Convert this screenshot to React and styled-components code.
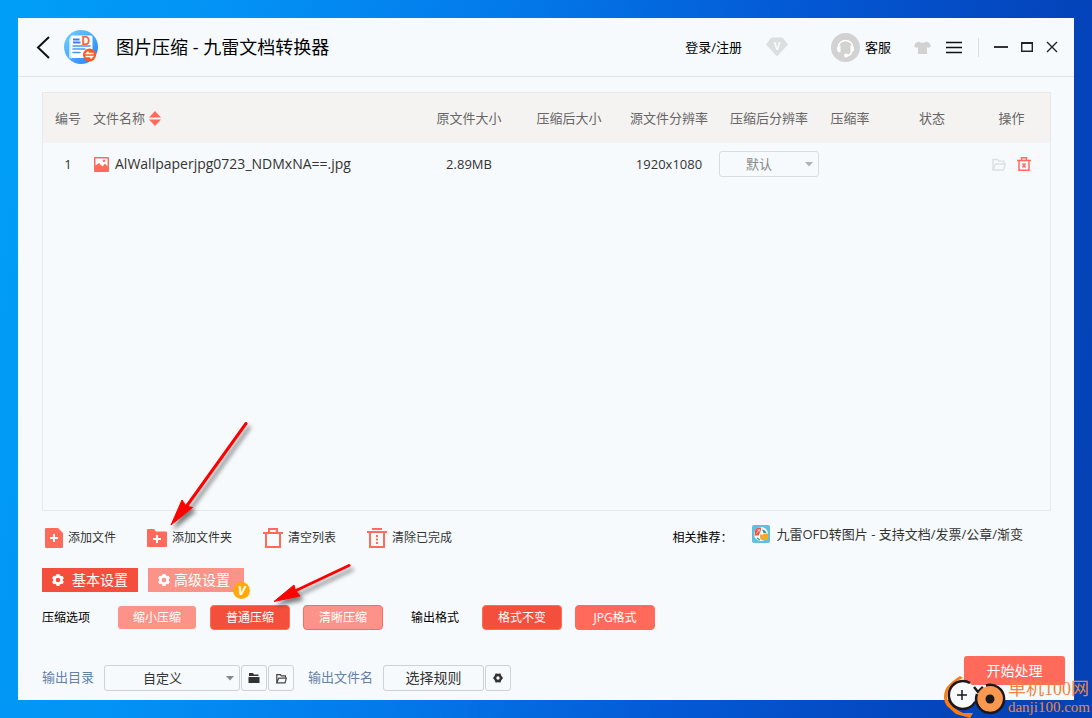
import React from "react";
import styled, { createGlobalStyle, css } from "styled-components";

const color = {
  surface: "#f6fafc",
  line: "#e2e5e7",
  control: "#cfd2d4",
  text: "#333333",
  muted: "#666666",
  label: "#6481a3",
  coral: "#ff6a5a",
  red: "#f44f3c",
  pale: "#fc9388",
  gray: "#d2d2d2",
};

const GlobalStyle = createGlobalStyle`
  *, *::before, *::after { box-sizing: border-box; }
  body { margin: 0; }
  body, button, select {
    font-family: "Open Sans", "Noto Sans CJK SC", sans-serif;
  }
  button { padding: 0; border: 0; background: none; color: inherit; cursor: pointer; }
  svg { display: block; flex: none; }
`;

const Desktop = styled.div`
  position: relative;
  display: flex;
  min-height: 100vh;
  padding: 18px;
  overflow: hidden;
  background: linear-gradient(100deg, #009ff6 0%, #0391f5 20%, #0379ea 42%, #0458d4 66%, #0444bb 88%, #0441b4 100%);
`;

const Window = styled.main`
  position: relative;
  flex: 1;
  min-width: 0;
  display: flex;
  flex-direction: column;
  background: ${color.surface};
  color: ${color.text};
`;

const TitleBar = styled.header`
  display: flex;
  align-items: center;
  height: 59px;
  padding: 0 16px 0 18px;
  border-bottom: 1px solid ${color.line};
  color: #000;
`;

const Title = styled.h1`
  flex: 1;
  margin: 0 0 0 18px;
  font-size: 18px;
  line-height: 24px;
  font-weight: 400;
`;

const BarButton = styled.button`
  display: flex;
  align-items: center;
  gap: 5px;
  margin-right: ${(p) => p.$after || 0}px;
  font-size: 13px;
  line-height: 20px;
`;

const Divider = styled.span`
  width: 1px;
  height: 19px;
  margin-right: 15px;
  background: #dcdfe1;
`;

const FilePanel = styled.section`
  flex: 1;
  margin: 15px 23px 0 24px;
  border: 1px solid #e6e9ea;
`;

const FileTable = styled.table`
  width: 100%;
  table-layout: fixed;
  border-collapse: collapse;
  font-size: 13px;
  line-height: 20px;
`;

const Col = styled.col`
  width: ${(p) => (p.$width ? `${p.$width}px` : "auto")};
`;

const HeadCell = styled.th`
  height: 50px;
  padding: 0 ${(p) => (p.$last ? 10 : 0)}px 0 0;
  background: #f5f3f2;
  color: ${color.muted};
  font-weight: 400;
  text-align: ${(p) => (p.$left ? "left" : "center")};
  white-space: nowrap;
`;

const Cell = styled.td`
  height: 42px;
  padding: 0 ${(p) => (p.$last ? 10 : 0)}px 0 0;
  text-align: center;
  white-space: nowrap;
`;

const FileName = styled.span`
  font-size: 14px;
  line-height: 20px;
`;

const Inline = styled.div`
  display: flex;
  align-items: center;
  justify-content: ${(p) => (p.$center ? "center" : "flex-start")};
  gap: ${(p) => p.$gap}px;
  padding-left: ${(p) => p.$indent || 0}px;
`;

const SelectBox = styled.div`
  position: relative;
  width: ${(p) => p.$width}px;
`;

const Select = styled.select`
  display: block;
  appearance: none;
  width: 100%;
  height: 26px;
  padding: 0 24px 0 ${(p) => p.$indent}px;
  border: 1px solid ${(p) => (p.$soft ? "#d9dddf" : color.control)};
  border-radius: 3px;
  background: transparent;
  color: ${(p) => (p.$soft ? "#888888" : color.text)};
  font-size: 13px;
  line-height: 20px;
`;

const Caret = styled.svg`
  position: absolute;
  top: 11px;
  right: 6px;
  pointer-events: none;
`;

const Toolbar = styled.div`
  display: flex;
  align-items: center;
  gap: 31px;
  height: 54px;
  padding: 0 51px 0 25px;
`;

const ToolButton = styled.button`
  display: flex;
  align-items: center;
  gap: 5px;
  font-size: 12px;
  line-height: 20px;
`;

const Related = styled.div`
  display: flex;
  align-items: center;
  gap: 19px;
  margin-left: auto;
  color: #000;
  font-size: 12px;
  line-height: 20px;
`;

const RelatedLink = styled.a`
  display: flex;
  align-items: center;
  gap: 7px;
  margin-bottom: 8px;
  color: ${color.text};
  font-size: 13px;
  line-height: 20px;
  text-decoration: none;
`;

const Tabs = styled.div`
  display: flex;
  gap: 10px;
  margin-top: 3px;
  padding: 0 24px;
`;

const Tab = styled.button`
  position: relative;
  display: flex;
  align-items: center;
  gap: ${(p) => (p.$active ? 8 : 4)}px;
  width: 96px;
  height: 24px;
  padding-left: 10px;
  background: ${(p) => (p.$active ? color.red : color.pale)};
  color: #fff;
  font-size: 14px;
  line-height: 20px;
`;

const VipBadge = styled.span`
  position: absolute;
  right: -6px;
  bottom: -7px;
  width: 17px;
  height: 17px;
  border-radius: 50%;
  background: #ffaa0a;
  color: #fff;
  font-size: 13px;
  line-height: 17px;
  font-weight: 700;
  font-style: italic;
  text-align: center;
`;

const Options = styled.div`
  display: flex;
  align-items: center;
  height: 27px;
  margin-top: 12px;
  padding: 0 24px;
  color: #000;
  font-size: 12px;
  line-height: 20px;
`;

const OptionGroup = styled.div`
  display: flex;
  align-items: center;
  gap: 13px;
  margin: 0 28px 0 ${(p) => p.$before}px;
`;

const tones = {
  plain: css`background: ${color.pale}; border-color: ${color.surface};`,
  outlined: css`background: ${color.pale}; border-color: ${color.coral};`,
  selected: css`background: ${color.red}; border-color: ${color.coral};`,
  solid: css`background: ${color.coral}; border-color: ${color.coral};`,
};

const OptionButton = styled.button`
  width: 80px;
  height: 25px;
  border: 1px solid;
  border-radius: 4px;
  color: #fff;
  font-size: 12px;
  line-height: 20px;
  ${(p) => tones[p.$tone]}
`;

const Footer = styled.footer`
  display: flex;
  align-items: flex-start;
  justify-content: space-between;
  height: 44px;
  margin-top: 25px;
  padding: 0 9px 0 24px;
`;

const Output = styled.div`
  display: flex;
  align-items: center;
  gap: 1px;
  padding-top: 9px;
`;

const FieldLabel = styled.label`
  margin: 0 9px 0 ${(p) => p.$before || 0}px;
  padding-bottom: 3px;
  color: ${color.label};
  font-size: 13px;
  line-height: 20px;
`;

const BoxButton = styled.button`
  display: flex;
  align-items: center;
  justify-content: center;
  width: ${(p) => p.$width || 26}px;
  height: 26px;
  border: 1px solid ${color.control};
  border-radius: 3px;
  font-size: 14px;
  line-height: 20px;
`;

const StartButton = styled.button`
  width: 101px;
  height: 29px;
  border-radius: 3px;
  background: ${color.coral};
  color: #fff;
  font-size: 14px;
  line-height: 20px;
`;

const Arrow = styled.svg`
  position: absolute;
  left: ${(p) => p.$left}px;
  bottom: ${(p) => p.$bottom}px;
  pointer-events: none;
  filter: drop-shadow(3px 4px 2px rgba(0, 0, 0, 0.5));
`;

const Watermark = styled.div`
  position: absolute;
  right: 2px;
  bottom: 0;
  display: flex;
  align-items: flex-end;
  gap: 1px;
  color: #ee8640;
  pointer-events: none;
`;

const WatermarkText = styled.div`
  display: flex;
  flex-direction: column;
  padding-bottom: 2px;
  font-family: "Liberation Serif", "Noto Sans CJK SC", serif;
  white-space: nowrap;
`;

const WatermarkName = styled.span`
  font-size: 18px;
  line-height: 20px;
`;

const WatermarkSite = styled.span`
  font-size: 15px;
  line-height: 17px;
`;

function AppLogo() {
  return (
    <svg width="34" height="34" viewBox="0 0 34 34" aria-hidden="true">
      <defs>
        <linearGradient id="disc" x1="0" y1="0" x2="1" y2="1">
          <stop offset="0" stopColor="#74d4ff" />
          <stop offset="1" stopColor="#1f7dff" />
        </linearGradient>
      </defs>
      <circle cx="17" cy="17" r="17" fill="url(#disc)" />
      <path d="M5 8.500h3v20h-1.500a1.500 1.500 0 0 1-1.500-1.500z" fill="#b9e3ff" />
      <path d="M8 5.500h19a1.500 1.500 0 0 1 1.500 1.500v21h-19a3 3 0 0 1-3-3V7a1.500 1.500 0 0 1 1.500-1.500z" fill="#fff" />
      <path d="M9 9.500h6.500M9 12.500h7.500" stroke="#3d7fe8" strokeWidth="2" />
      <path d="M9 16h17M9 19h12M9 22.500h7" stroke="#4a96f5" strokeWidth="1.500" strokeLinecap="round" />
      <text x="17.500" y="14.500" fontFamily="Liberation Sans, sans-serif" fontSize="12" fontWeight="700" fill="#f7633a">D</text>
      <circle cx="25.500" cy="25" r="6.500" fill="#fb5823" />
      <path d="M29.500 23.500h-7l2-2M21.500 26.500h7l-2 2" fill="none" stroke="#fff" strokeWidth="1.500" />
    </svg>
  );
}

function VipIcon() {
  return (
    <svg width="22" height="20" viewBox="0 0 22 20" aria-hidden="true">
      <path d="M5.500 1h11L21.500 7.500 11 19 .5 7.500z" fill="#dcdfe1" stroke="#dcdfe1" strokeLinejoin="round" />
      <text x="11" y="13" textAnchor="middle" fontFamily="Liberation Sans, sans-serif" fontSize="10" fontWeight="700" fill="#fff">V</text>
    </svg>
  );
}

function HeadsetIcon() {
  return (
    <svg width="29" height="29" viewBox="0 0 29 29" aria-hidden="true">
      <circle cx="14.500" cy="14.500" r="14.500" fill={color.gray} />
      <path d="M7.500 15v-1.500a7 6 0 0 1 14 0V15" fill="none" stroke="#fff" strokeWidth="1.500" />
      <path d="M9.500 12.500v7c-2.500 0-3.500-1.500-3.500-3.500s1-3.500 3.500-3.500zM19.500 12.500v7c2.500 0 3.500-1.500 3.500-3.500s-1-3.500-3.500-3.500z" fill="#fff" />
      <path d="M20.500 19c-.5 2.500-2 3.500-5 3.700" fill="none" stroke="#fff" strokeWidth="1.500" />
      <circle cx="15" cy="22.500" r="2" fill="#fff" />
    </svg>
  );
}

function ShirtIcon() {
  return (
    <svg width="17" height="13" viewBox="0 0 17 13" aria-hidden="true">
      <path d="M5 .5c1.500 1.700 5.500 1.700 7 0L15.500 2 17 5.500 14.200 7 13 6v7H4V6L2.800 7 0 5.500 1.500 2z" fill={color.gray} />
    </svg>
  );
}

function FolderOpenIcon({ tint, width = 14, stroke = 1.3 }) {
  return (
    <svg width={width} height="13" viewBox="0 0 14 13" fill="none" stroke={tint} strokeWidth={stroke} aria-hidden="true">
      <path d="M1 12V1.500h4.500l1.300 1.700H12V5M1 12h10.500l1.700-6H3.500z" />
    </svg>
  );
}

function GearIcon({ tint, size = 12 }) {
  return (
    <svg width={size} height={size} viewBox="0 0 12 12" aria-hidden="true">
      <circle cx="6" cy="6" r="3.600" fill="none" stroke={tint} strokeWidth="2.600" />
      <path d="M6 0v2M6 10v2M.8 3l1.700 1M9.500 8l1.700 1M.8 9l1.700-1M9.500 4l1.700-1" stroke={tint} strokeWidth="3" />
    </svg>
  );
}

function HexNutIcon() {
  return (
    <svg width="10" height="10" viewBox="0 0 10 10" aria-hidden="true">
      <path d="M2.500.5h1.700L5 1l.8-.5h1.700L8.300 2.800 10 5 8.300 7.200 7.500 9.500H5.800L5 9l-.8.5H2.500L1.700 7.200 0 5l1.700-2.200z" fill="#333" />
      <circle cx="5" cy="5" r="1.700" fill="#fff" />
    </svg>
  );
}

function ImageFileIcon() {
  return (
    <svg width="15" height="15" viewBox="0 0 15 15" aria-hidden="true">
      <rect width="15" height="15" rx="1" fill={color.coral} />
      <path d="M1.500 1.500h12v8L11 6.500 8.500 9.500 5 6 1.500 8.500z" fill="#fff" />
      <circle cx="10" cy="3.800" r="1.200" fill={color.coral} />
    </svg>
  );
}

function SortIcon() {
  return (
    <svg width="12" height="15" viewBox="0 0 12 15" fill={color.coral} aria-hidden="true">
      <path d="M6 0l6 6.500H0zM0 8.500h12L6 15z" />
    </svg>
  );
}

function RowTrashIcon() {
  return (
    <svg width="14" height="14" viewBox="0 0 14 14" fill="none" stroke={color.coral} strokeWidth="1.500" aria-hidden="true">
      <path d="M0 3.500h14M4.500 3V.8h5V3M2 3.500v9.700h10V3.500M5.500 6.500l3 4M8.500 6.500l-3 4" />
    </svg>
  );
}

function AddFileIcon() {
  return (
    <svg width="20" height="20" viewBox="0 0 20 20" aria-hidden="true">
      <path d="M3 0h12l5 5v13.500a1.500 1.500 0 0 1-1.500 1.500H3.500A1.500 1.500 0 0 1 2 18.500V1a1 1 0 0 1 1-1z" fill={color.coral} />
      <path d="M11 6v8M7 10h8" stroke="#fff" strokeWidth="2" />
    </svg>
  );
}

function AddFolderIcon() {
  return (
    <svg width="20" height="20" viewBox="0 0 20 20" aria-hidden="true">
      <path d="M1 1h6l2 2.500h10a1 1 0 0 1 1 1V18a1 1 0 0 1-1 1H1a1 1 0 0 1-1-1V2a1 1 0 0 1 1-1z" fill={color.coral} />
      <path d="M10 7v8M6 11h8" stroke="#fff" strokeWidth="2" />
    </svg>
  );
}

function ClearIcon() {
  return (
    <svg width="20" height="20" viewBox="0 0 20 20" fill="none" stroke={color.coral} strokeWidth="2" aria-hidden="true">
      <path d="M0 5h20M6 5V1h8v4M3 5v14h14V5" />
    </svg>
  );
}

function ClearDoneIcon() {
  return (
    <svg width="20" height="20" viewBox="0 0 20 20" fill="none" stroke={color.coral} strokeWidth="2" aria-hidden="true">
      <path d="M0 4h20M5 1h10M3 4v15h14V4" />
      <path d="M10 7v9" strokeDasharray="2 1.500" />
    </svg>
  );
}

function OfdIcon() {
  return (
    <svg width="18" height="18" viewBox="0 0 18 18" aria-hidden="true">
      <rect width="18" height="18" rx="2" fill="#62bfe0" />
      <circle cx="9" cy="9" r="7" fill="#fff" />
      <path d="M3 5.500C4 3 6 2 9 2.500V6L6.500 10.500H2.500z" fill="#ea5546" />
      <path d="M4.500 8.500L7.500 4.500M5 5h3v2.500" fill="none" stroke="#fff" strokeWidth=".6" />
      <path d="M10 4.500c2 0 3.500 1 4.500 3.500h-3z" fill="#2b95b5" />
      <path d="M8 9.500h3l1-1h4V15H9.500L8 13z" fill="#f7a91f" />
      <path d="M5 13l3 2" stroke="#35a877" strokeWidth="1.500" />
    </svg>
  );
}

function WatermarkLogo() {
  return (
    <svg width="64" height="43" viewBox="0 0 64 43" fill="none" aria-hidden="true">
      <path d="M20 3L17 1C12 4 7 8 4 12C0 18 0 26 4 31L13 39L27 43L30 38L20 38C9 33 3 26 4 19C6 11 12 6 20 3z" fill="#ff7a0f" />
      <circle cx="19" cy="20" r="14" fill="#f6fafc" />
      <path d="M27 8A14 14 0 1 0 32 27" stroke="#1c1718" strokeWidth="2.500" />
      <path d="M19 15v10M14 20h10" stroke="#1c1718" strokeWidth="1.500" />
      <path d="M31 12l4 5 5-5" stroke="#1c1718" strokeWidth="2.500" />
      <circle cx="47" cy="24" r="13" fill="#fb9850" />
      <path d="M43 10.500A14 14 0 1 1 34 19" stroke="#1c1718" strokeWidth="2.500" />
      <circle cx="47" cy="24" r="4.500" fill="#1c1718" />
    </svg>
  );
}

function DropDown({ id, label, value, width, indent, soft }) {
  return (
    <SelectBox $width={width}>
      <Select id={id} aria-label={label} defaultValue={value} $indent={indent} $soft={soft}>
        <option>{value}</option>
      </Select>
      <Caret width="8" height="5" viewBox="0 0 8 5" aria-hidden="true">
        <path d="M0 0h8L4 4.500z" fill={soft ? "#b0b3b5" : "#888"} />
      </Caret>
    </SelectBox>
  );
}

const columns = [
  { name: "编号", width: 50 },
  { name: "文件名称", sortable: true },
  { name: "原文件大小", width: 100 },
  { name: "压缩后大小", width: 100 },
  { name: "源文件分辨率", width: 100 },
  { name: "压缩后分辨率", width: 100 },
  { name: "压缩率", width: 62 },
  { name: "状态", width: 102 },
  { name: "操作", width: 67, last: true },
];

const files = [{ id: 1, name: "AlWallpaperjpg0723_NDMxNA==.jpg", size: "2.89MB", resolution: "1920x1080" }];

const tools = [
  { label: "添加文件", Icon: AddFileIcon },
  { label: "添加文件夹", Icon: AddFolderIcon },
  { label: "清空列表", Icon: ClearIcon },
  { label: "清除已完成", Icon: ClearDoneIcon },
];

export default function App() {
  return (
    <Desktop>
      <GlobalStyle />
      <Window>
        <TitleBar>
          <BarButton $after={14} aria-label="返回">
            <svg width="14" height="24" viewBox="0 0 14 24" fill="none" stroke="#111" strokeWidth="2" aria-hidden="true">
              <path d="M13 2L2 12.500 13 23" />
            </svg>
          </BarButton>
          <AppLogo />
          <Title>图片压缩 - 九雷文档转换器</Title>
          <BarButton $after={24}>登录/注册</BarButton>
          <BarButton $after={43} aria-label="VIP"><VipIcon /></BarButton>
          <BarButton $after={23}><HeadsetIcon />客服</BarButton>
          <BarButton $after={15} aria-label="皮肤"><ShirtIcon /></BarButton>
          <BarButton $after={16} aria-label="菜单">
            <svg width="16" height="13" viewBox="0 0 16 13" stroke="#111" strokeWidth="1.600" aria-hidden="true">
              <path d="M0 1.500h16M0 6.500h16M0 11.500h16" />
            </svg>
          </BarButton>
          <Divider />
          <BarButton $after={13} aria-label="最小化">
            <svg width="14" height="12" viewBox="0 0 14 12" stroke="#333" strokeWidth="2" aria-hidden="true">
              <path d="M0 6h14" />
            </svg>
          </BarButton>
          <BarButton $after={13} aria-label="最大化">
            <svg width="12" height="10" viewBox="0 0 12 10" fill="none" stroke="#222" aria-hidden="true">
              <path d="M0 1h12" strokeWidth="2" />
              <path d="M.7 1v8.300h10.600V1" strokeWidth="1.400" />
            </svg>
          </BarButton>
          <BarButton aria-label="关闭">
            <svg width="12" height="12" viewBox="0 0 12 12" stroke="#222" strokeWidth="1.400" aria-hidden="true">
              <path d="M1 1l10 10M11 1L1 11" />
            </svg>
          </BarButton>
        </TitleBar>

        <FilePanel>
          <FileTable>
            <colgroup>
              {columns.map((c) => <Col key={c.name} $width={c.width} />)}
            </colgroup>
            <thead>
              <tr>
                {columns.map((c) => (
                  <HeadCell key={c.name} $left={c.sortable} $last={c.last}>
                    {c.sortable ? <Inline $gap={4}>{c.name}<SortIcon /></Inline> : c.name}
                  </HeadCell>
                ))}
              </tr>
            </thead>
            <tbody>
              {files.map((f) => (
                <tr key={f.id}>
                  <Cell>{f.id}</Cell>
                  <Cell><Inline $gap={6} $indent={1}><ImageFileIcon /><FileName>{f.name}</FileName></Inline></Cell>
                  <Cell>{f.size}</Cell>
                  <Cell />
                  <Cell>{f.resolution}</Cell>
                  <Cell>
                    <Inline $center $gap={0}>
                      <DropDown label="压缩后分辨率" value="默认" width={100} indent={26} soft />
                    </Inline>
                  </Cell>
                  <Cell />
                  <Cell />
                  <Cell $last>
                    <Inline $center $gap={11}>
                      <BarButton aria-label="打开"><FolderOpenIcon tint="#dcdfe1" /></BarButton>
                      <BarButton aria-label="删除"><RowTrashIcon /></BarButton>
                    </Inline>
                  </Cell>
                </tr>
              ))}
            </tbody>
          </FileTable>
        </FilePanel>

        <Toolbar>
          {tools.map(({ label, Icon }) => (
            <ToolButton key={label}><Icon />{label}</ToolButton>
          ))}
          <Related>
            相关推荐：
            <RelatedLink href="#ofd"><OfdIcon />九雷OFD转图片 - 支持文档/发票/公章/渐变</RelatedLink>
          </Related>
        </Toolbar>

        <Tabs>
          <Tab $active><GearIcon tint="#fff" />基本设置</Tab>
          <Tab><GearIcon tint="#fff" />高级设置<VipBadge>V</VipBadge></Tab>
        </Tabs>

        <Options>
          压缩选项
          <OptionGroup $before={27}>
            <OptionButton $tone="plain">缩小压缩</OptionButton>
            <OptionButton $tone="selected">普通压缩</OptionButton>
            <OptionButton $tone="outlined">清晰压缩</OptionButton>
          </OptionGroup>
          输出格式
          <OptionGroup $before={23}>
            <OptionButton $tone="selected">格式不变</OptionButton>
            <OptionButton $tone="solid">JPG格式</OptionButton>
          </OptionGroup>
        </Options>

        <Footer>
          <Output>
            <FieldLabel htmlFor="output-dir">输出目录</FieldLabel>
            <DropDown id="output-dir" value="自定义" width={136} indent={38} />
            <BoxButton aria-label="选择目录">
              <svg width="12" height="10" viewBox="0 0 12 10" fill="#333" aria-hidden="true">
                <path d="M1 0h4l1 1.500h4.500V3H1zM.5 4h11v6h-11z" />
              </svg>
            </BoxButton>
            <BoxButton aria-label="打开目录"><FolderOpenIcon tint="#444" width={11} stroke={1.5} /></BoxButton>
            <FieldLabel $before={13} htmlFor="name-rule">输出文件名</FieldLabel>
            <BoxButton id="name-rule" $width={101}>选择规则</BoxButton>
            <BoxButton aria-label="规则设置"><HexNutIcon /></BoxButton>
          </Output>
          <StartButton>开始处理</StartButton>
        </Footer>

        <Arrow $left={152} $bottom={173} width="80" height="106" viewBox="0 0 80 106" aria-hidden="true">
          <path d="M76 2.500L16 86" stroke="#f00" strokeWidth="3" strokeLinecap="round" />
          <path d="M1 104L12 79l4 6 6.500 1.500z" fill="#f00" stroke="#f00" strokeLinejoin="round" />
        </Arrow>
        <Arrow $left={255} $bottom={95} width="80" height="42" viewBox="0 0 80 42" aria-hidden="true">
          <path d="M76 2.500L22 28" stroke="#f00" strokeWidth="3" strokeLinecap="round" />
          <path d="M1 38.500L21 22l1.500 5.500L27 33z" fill="#f00" stroke="#f00" strokeLinejoin="round" />
        </Arrow>
      </Window>

      <Watermark>
        <WatermarkLogo />
        <WatermarkText>
          <WatermarkName>单机100网</WatermarkName>
          <WatermarkSite>danji100.com</WatermarkSite>
        </WatermarkText>
      </Watermark>
    </Desktop>
  );
}
